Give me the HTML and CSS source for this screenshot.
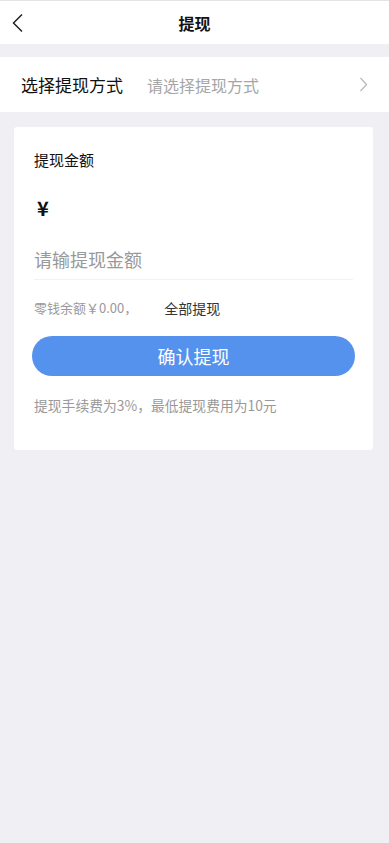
FILE: index.html
```html
<!DOCTYPE html>
<html lang="zh-CN">
<head>
<meta charset="utf-8">
<title>提现</title>
<link rel="stylesheet" href="styles.css">
</head>
<body>
<header class="header">
  <div class="header-left">
    <svg class="back" width="12" height="20" viewBox="0 0 12 20"><polyline points="10,1.5 1.5,10 10,18.5" fill="none" stroke="#222" stroke-width="1.5"/></svg>
  </div>
  <div class="title">提现</div>
  <div class="header-right"></div>
</header>

<div class="method-row">
  <span class="method-label">选择提现方式</span>
  <span class="method-placeholder">请选择提现方式</span>
  <svg class="arrow" width="9" height="15" viewBox="0 0 9 15"><polyline points="1.5,1 7.5,7.5 1.5,14" fill="none" stroke="#bbbbbb" stroke-width="1.3"/></svg>
</div>

<section class="card">
  <div class="card-title">提现金额</div>
  <div class="currency">¥</div>
  <div class="amount-input">请输提现金额</div>
  <div class="balance-row">
    <span class="balance">零钱余额￥0.00，</span>
    <span class="all">全部提现</span>
  </div>
  <button class="confirm">确认提现</button>
  <div class="note">提现手续费为3%，最低提现费用为10元</div>
</section>
</body>
</html>
```

FILE: styles.css
```css
html, body {
  margin: 0;
  padding: 0;
}
body {
  background: #efeff4;
  font-family: "Noto Sans CJK SC", "Noto Sans", sans-serif;
  color: #222;
  min-height: 843px;
  border-top: 1px solid #e4e4e7;
}
.header {
  height: 43px;
  background: #fff;
  display: grid;
  grid-template-columns: 1fr auto 1fr;
  align-items: center;
}
.header-left {
  padding-left: 12px;
  display: flex;
  align-items: center;
}
.back {
  display: block;
}
.title {
  font-size: 16px;
  font-weight: 700;
  color: #111;
  line-height: 20px;
}
.method-row {
  margin-top: 13px;
  height: 55px;
  background: #fff;
  display: flex;
  align-items: center;
  padding: 0 21px;
}
.method-label {
  font-size: 17px;
  color: #111;
  line-height: 22px;
}
.method-placeholder {
  flex: 1;
  margin-left: 24px;
  font-size: 16px;
  color: #a6a6a6;
  line-height: 22px;
}
.arrow {
  display: block;
}
.card {
  margin: 15px 16px 0 14px;
  background: #fff;
  border-radius: 3px;
  padding: 23px 20px 35px 20px;
}
.card-title {
  font-size: 15px;
  line-height: 20px;
  color: #111;
}
.currency {
  margin-top: 26px;
  font-size: 20px;
  font-weight: 700;
  line-height: 24px;
  padding-left: 3px;
  color: #111;
}
.amount-input {
  margin-top: 20px;
  height: 39px;
  line-height: 39px;
  font-size: 18px;
  color: #999;
  border-bottom: 1px solid #f2f2f2;
}
.balance-row {
  margin-top: 18px;
  line-height: 20px;
  display: flex;
  align-items: center;
}
.balance {
  font-size: 13px;
  color: #999;
}
.all {
  margin-left: 27px;
  font-size: 14px;
  color: #333;
}
.confirm {
  display: block;
  margin: 18px -2px 0 -2px;
  width: calc(100% + 4px);
  height: 40px;
  border: none;
  border-radius: 20px;
  background: #5592ee;
  color: #fff;
  font-family: "Noto Sans CJK SC", "Noto Sans", sans-serif;
  font-size: 18px;
  padding: 0;
}
.note {
  margin-top: 19px;
  font-size: 13.8px;
  line-height: 20px;
  color: #999;
}
```
